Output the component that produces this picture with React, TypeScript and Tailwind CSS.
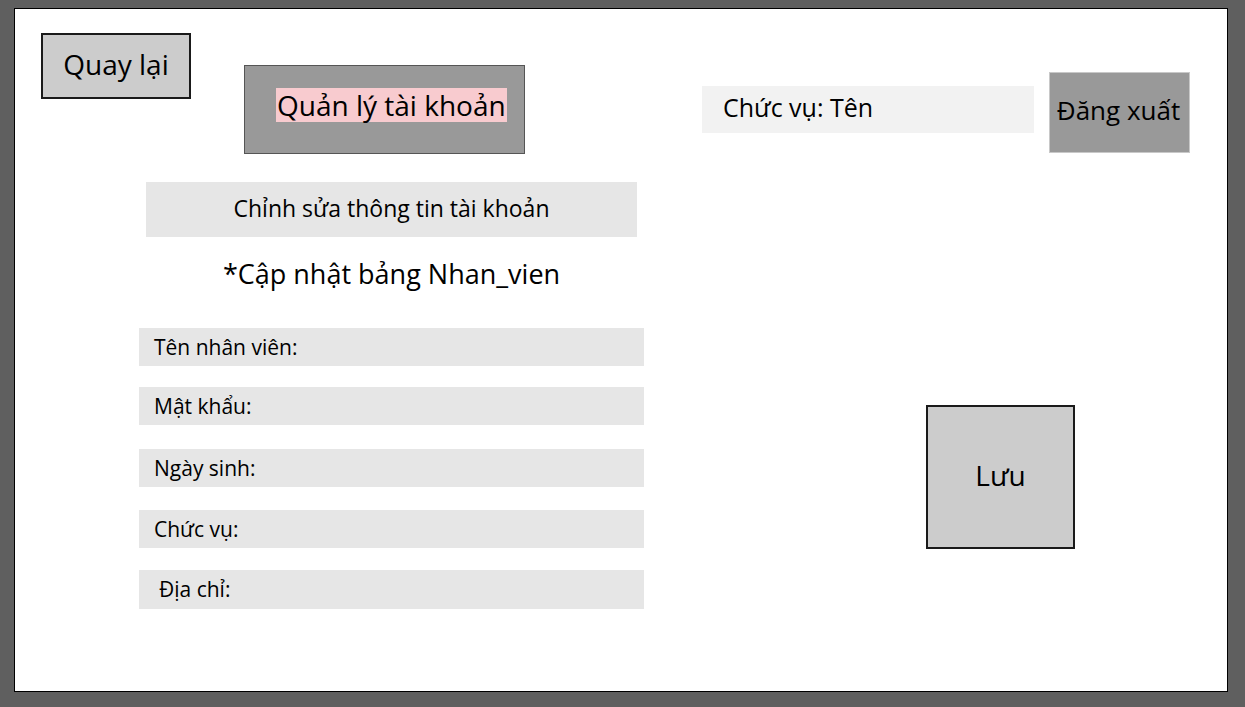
import React from "react";

const font = { fontFamily: '"Open Sans", "Noto Sans", sans-serif' };

function Field({ label, className }: { label: string; className: string }) {
  return (
    <div className={`flex items-center bg-[#e6e6e6] w-[505px] ${className}`}>
      <span className="text-[21px] font-medium text-black leading-none">{label}</span>
    </div>
  );
}

export default function App() {
  return (
    <div className="w-[1245px] h-[707px] bg-[#5f5f5f] pt-[8px] pl-[14px]" style={font}>
      <div className="w-[1214px] h-[684px] bg-white border border-black flex flex-col">
        {/* top row */}
        <div className="flex items-start">
          <div className="ml-[26px] mt-[24px] w-[150px] h-[66px] bg-[#cccccc] border-2 border-[#1a1a1a] flex items-center justify-center pb-[5px]">
            <span className="text-[28px] text-black leading-none">Quay lại</span>
          </div>
          <div className="ml-[53px] mt-[56px] w-[281px] h-[89px] bg-[#999999] border border-[#555555] flex items-center pl-[31px] pb-[10px]">
            <span className="text-[28px] text-black leading-[34px] bg-[#f8cbcf] px-[1px]">Quản lý tài khoản</span>
          </div>
          <div className="ml-[177px] mt-[77px] w-[332px] h-[47px] bg-[#f2f2f2] flex items-center pl-[21px] pb-[4px]">
            <span className="text-[25px] text-black leading-none">Chức vụ: Tên</span>
          </div>
          <div className="ml-[15px] mt-[63px] w-[141px] h-[81px] bg-[#999999] border border-[#c8c8c8] flex items-center justify-center pr-[2px] pb-[5px]">
            <span className="text-[26px] text-black leading-none whitespace-nowrap">Đăng xuất</span>
          </div>
        </div>
        {/* bottom */}
        <div className="flex items-start">
          <div className="flex flex-col ml-[124px] w-[505px]">
            <div className="ml-[7px] mt-[28px] w-[491px] h-[55px] bg-[#e6e6e6] flex items-center justify-center pb-[2px]">
              <span className="text-[23px] text-black leading-none">Chỉnh sửa thông tin tài khoản</span>
            </div>
            <div className="mt-[18px] h-[36px] flex items-center justify-center">
              <span className="text-[27px] text-black leading-none">*Cập nhật bảng Nhan_vien</span>
            </div>
            <Field label="Tên nhân viên:" className="mt-[37px] h-[38px] pl-[15px]" />
            <Field label="Mật khẩu:" className="mt-[21px] h-[38px] pl-[15px]" />
            <Field label="Ngày sinh:" className="mt-[24px] h-[38px] pl-[15px]" />
            <Field label="Chức vụ:" className="mt-[23px] h-[38px] pl-[15px]" />
            <Field label="Địa chỉ:" className="mt-[22px] h-[39px] pl-[20px]" />
          </div>
          <div className="ml-[282px] mt-[251px] w-[149px] h-[144px] bg-[#cccccc] border-2 border-[#1a1a1a] flex items-center justify-center pb-[4px]">
            <span className="text-[28px] text-black leading-none">Lưu</span>
          </div>
        </div>
      </div>
    </div>
  );
}
